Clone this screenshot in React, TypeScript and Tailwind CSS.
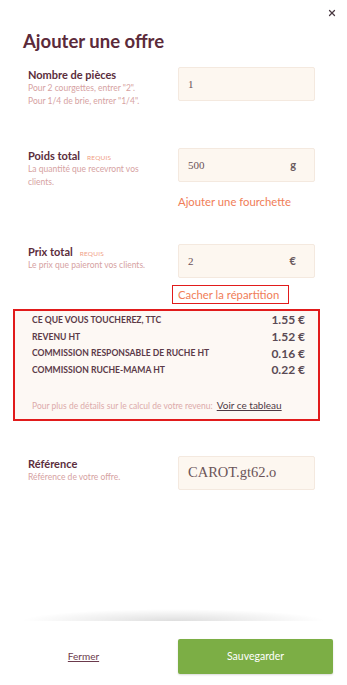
import { X } from 'lucide-react';

const sans = "font-['Lato','Open_Sans',sans-serif]";
const serif = "font-['Liberation_Serif','DejaVu_Serif',serif]";

interface FieldRowProps {
  label: string;
  required?: boolean;
  hint: string[];
  value: string;
  unit?: string;
  valueClass?: string;
  className?: string;
}

function FieldRow({ label, required, hint, value, unit, valueClass, className }: FieldRowProps) {
  return (
    <div className={`flex items-start ${className ?? ''}`}>
      <div className="w-[178px] pl-[28px] pt-[1px]">
        <div className="flex items-baseline gap-[7px]">
          <span className="text-[11px] leading-[14px] font-bold text-[#5b2d3c]">{label}</span>
          {required && (
            <span className="text-[6.5px] tracking-[0.2px] text-[#f0a085] uppercase">Requis</span>
          )}
        </div>
        {hint.map(line => (
          <div key={line} className="text-[8.5px] leading-[13px] text-[#d6a2a2] whitespace-nowrap">
            {line}
          </div>
        ))}
      </div>
      <div className="w-[137px] h-[34px] bg-[#fdf7f0] border border-[#f4e9df] rounded-[2px] flex items-center justify-between pl-[9px] pr-[18px]">
        <span className={valueClass ?? `${serif} text-[11px] text-[#6a5258]`}>{value}</span>
        {unit && <span className="text-[11px] font-bold text-[#6a5a5e]">{unit}</span>}
      </div>
    </div>
  );
}

const rows = [
  { label: 'Ce que vous toucherez, TTC', value: '1.55 €' },
  { label: 'Revenu HT', value: '1.52 €' },
  { label: 'Commission responsable de ruche HT', value: '0.16 €' },
  { label: 'Commission Ruche-mama HT', value: '0.22 €' },
];

export default function App() {
  return (
    <div className={`${sans} w-[347px] h-[685px] bg-white relative overflow-hidden flex flex-col`}>
      <div className="flex justify-end pt-[8px] pr-[10px]">
        <X className="w-[10px] h-[10px] text-[#4a3a42]" strokeWidth={3} />
      </div>

      <h1 className="mt-[12px] pl-[23px] text-[18.5px] leading-[22px] font-bold text-[#5b2a3a]">
        Ajouter une offre
      </h1>

      <FieldRow
        className="mt-[15px]"
        label="Nombre de pièces"
        hint={['Pour 2 courgettes, entrer "2".', 'Pour 1/4 de brie, entrer "1/4".']}
        value="1"
      />

      <FieldRow
        className="mt-[40px]"
        label="Poids total"
        required
        hint={['La quantité que recevront vos', 'clients.']}
        value="500"
        unit="g"
      />

      <div className="mt-[5px] pl-[178px] text-[11.3px] leading-[16px] text-[#f07d58]">
        Ajouter une fourchette
      </div>

      <FieldRow
        className="mt-[34px]"
        label="Prix total"
        required
        hint={['Le prix que paieront vos clients.']}
        value="2"
        unit="€"
      />

      <div className="mt-[7px] ml-[172px] w-[117px] h-[19px] border-[1.5px] border-[#e11b1b] flex items-center pl-[5px]">
        <span className="text-[11.3px] leading-[14px] text-[#f07d58] whitespace-nowrap">Cacher la répartition</span>
      </div>

      <div className="mt-[5px] mx-[13px] w-[307px] h-[112px] border-2 border-[#e11b1b] bg-[#fdf8f4] pl-[17px] pr-[13px] pt-[1px] flex flex-col">
        {rows.map(row => (
          <div key={row.label} className="flex items-center justify-between h-[16.7px]">
            <span className="text-[8.6px] font-bold uppercase text-[#5b3a48]">{row.label}</span>
            <span className="text-[12px] font-bold text-[#5a4a55]">{row.value}</span>
          </div>
        ))}
        <div className="mt-auto mb-[6px] flex items-baseline gap-[4px] whitespace-nowrap">
          <span className="text-[8.5px] text-[#dcaaaa]">Pour plus de détails sur le calcul de votre revenu:</span>
          <span className="text-[10px] text-[#4e3a44] underline">Voir ce tableau</span>
        </div>
      </div>

      <FieldRow
        className="mt-[35px]"
        label="Référence"
        hint={['Référence de votre offre.']}
        value="CAROT.gt62.o"
        valueClass={`${serif} text-[14.5px] text-[#6b5458]`}
      />

      <div className="mt-[119px] mx-[20px] h-[12px] bg-[radial-gradient(ellipse_at_bottom,rgba(0,0,0,0.13),rgba(0,0,0,0)_70%)]" />

      <div className="mt-[18px] flex items-center">
        <div className="w-[178px] flex justify-center pr-[11px]">
          <span className="text-[10px] text-[#6b3a4c] underline">Fermer</span>
        </div>
        <button className="w-[155px] h-[35px] rounded-[2px] bg-[#7cae45] text-white text-[10.5px] shadow-[0_1px_2px_rgba(0,0,0,0.15)]">
          Sauvegarder
        </button>
      </div>
    </div>
  );
}
